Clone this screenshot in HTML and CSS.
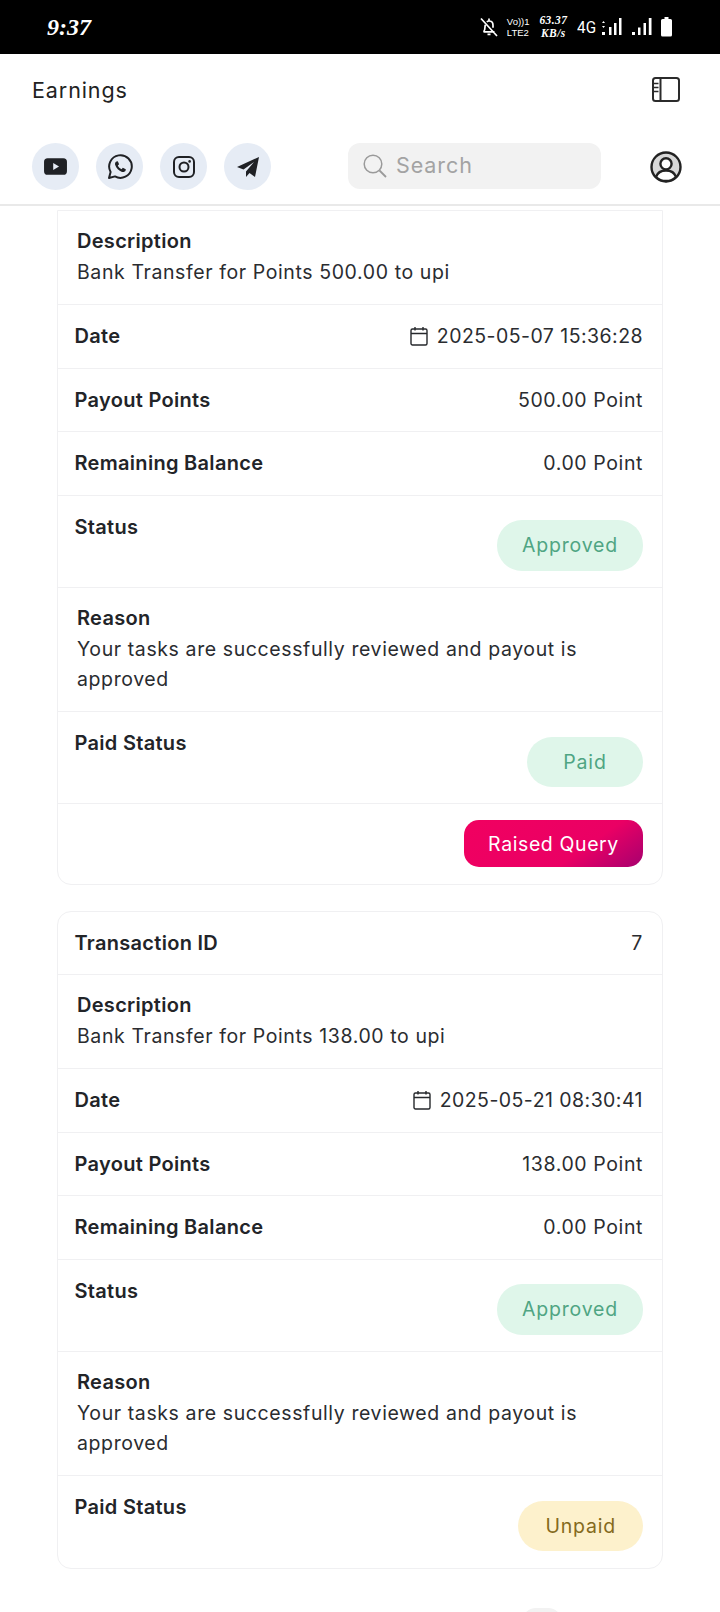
FILE: index.html
```html
<!DOCTYPE html>
<html lang="en">
<head>
<meta charset="utf-8">
<title>Earnings</title>
<link rel="stylesheet" href="styles.css">
</head>
<body>
<div class="statusbar">
  <span class="clock">9:37</span>
  <div class="status-icons">
    <svg class="bell" viewBox="0 0 20 20" width="20" height="20"><path d="M4.500 14.800c1.200-1.200 1.500-2.800 1.500-4.800 0-.8.100-1.500.4-2.100M7.800 4.800c.6-.5 1.400-.8 2.200-.8 2.400 0 4 1.800 4 4.200v2.500M15.500 14.800H4.500M8.500 17.300h3M10 1.500v2M2 1.500l16 17.500" fill="none" stroke="#fff" stroke-width="1.700"/></svg>
    <span class="net-stack"><span>Vo))1</span><span>LTE2</span></span>
    <span class="speed"><span>63.37</span><span>KB/s</span></span>
    <span class="fourg">4G</span>
    <svg class="sig-a" viewBox="0 0 20 18" width="20" height="18"><path d="M0 5l1.500-2L3 5zM0 8l1.500 2L3 8zM0 14h3v3H0zM7 9h2.500v8H7zM12 5h2.500v12H12zM17 0h2.500v17H17z" fill="#fff"/></svg>
    <svg class="sig-b" viewBox="0 0 20 18" width="20" height="18"><path d="M0 14h3v3H0zM6 9.500h2.500V17H6zM11.500 5H14v12h-2.500zM16.800 0h2.700v17h-2.700z" fill="#fff"/></svg>
    <svg class="batt" viewBox="0 0 11 20" width="11" height="20"><path d="M3.500 0h4v2h2a1.500 1.500 0 0 1 1.500 1.500V18a1.500 1.500 0 0 1-1.500 1.500h-8A1.500 1.500 0 0 1 0 18V3.500A1.500 1.500 0 0 1 1.500 2h2z" fill="#fff"/></svg>
  </div>
</div>

<header class="topbar">
  <div class="title-row">
    <h1 class="title">Earnings</h1>
    <svg class="side-icon" viewBox="0 0 28 25" width="28" height="25"><rect x="1" y="1" width="26" height="23" rx="2.500" fill="none" stroke="#2b2b2b" stroke-width="2"/><path d="M8.500 1v23" stroke="#2b2b2b" stroke-width="2"/><path d="M2 6.500h4.500M2 10.500h4.500M2 14.500h4.500" stroke="#2b2b2b" stroke-width="1.700"/></svg>
  </div>
  <div class="tool-row">
    <div class="socials">
      <span class="social"><svg viewBox="0 0 24 24" width="25" height="25"><path d="M4.500 4h15A3.500 3.500 0 0 1 23 7.500v9a3.500 3.500 0 0 1-3.500 3.500h-15A3.500 3.500 0 0 1 1 16.500v-9A3.500 3.500 0 0 1 4.500 4zM9.800 8.700v6.600l5.600-3.300z" fill="#1f2125" fill-rule="evenodd"/></svg></span>
      <span class="social"><svg viewBox="0 0 26 26" width="26" height="26"><path d="M2 24l1.600-6A11.300 11.300 0 1 1 8 22.400z" fill="none" stroke="#1f2125" stroke-width="2" stroke-linejoin="round"/><path d="M9.500 7.500c-1.300.5-1.800 2-1.300 3.600 1 3 3.700 5.800 6.800 6.800 1.600.5 3 0 3.600-1.300l.2-1.300-3-1.500-1.200 1.400c-1.700-.7-3-2-3.800-3.700l1.300-1.300-1.300-3z" fill="#1f2125"/></svg></span>
      <span class="social"><svg viewBox="0 0 24 24" width="24" height="24"><rect x="2" y="2" width="20" height="20" rx="5" fill="none" stroke="#1f2125" stroke-width="2"/><circle cx="12" cy="12" r="4.500" fill="none" stroke="#1f2125" stroke-width="2"/><circle cx="17.600" cy="6.400" r="1.300" fill="#1f2125"/></svg></span>
      <span class="social"><svg viewBox="0 0 24 24" width="24" height="24"><path d="M23 2L1 12l6.500 2.500L18 7l-8 9.500V22l3.500-4 5.500 4z" fill="#1f2125"/></svg></span>
    </div>
    <div class="search">
      <svg viewBox="0 0 24 24" width="24" height="24"><circle cx="10" cy="10" r="8.800" fill="none" stroke="#9a9a9a" stroke-width="1.500"/><path d="M16.500 16.500l6.500 6.500" stroke="#9a9a9a" stroke-width="1.800"/></svg>
      <span class="search-text">Search</span>
    </div>
    <svg class="profile" viewBox="0 0 32 32" width="32" height="32"><circle cx="16" cy="16" r="14.500" fill="#d8d8d8" stroke="#222" stroke-width="2.400"/><circle cx="16" cy="12.800" r="5.600" fill="#fff" stroke="#222" stroke-width="2.400"/><path d="M6 26c1.500-4.500 5.500-6.500 10-6.500s8.500 2 10 6.500c-2.500 2.600-6 4-10 4s-7.500-1.400-10-4z" fill="#fff" stroke="#222" stroke-width="2.400"/></svg>
  </div>
</header>

<main class="content">
  <section class="card card-first">
    <div class="row stack"><div class="label">Description</div><div class="value">Bank Transfer for Points 500.00 to upi</div></div>
    <div class="row"><div class="label">Date</div><div class="value date"><svg viewBox="0 0 18 20" width="18" height="20"><rect x="1" y="3" width="16" height="16" rx="1.500" fill="none" stroke="#26282c" stroke-width="1.400"/><path d="M1 7.500h16M5 1v3.500M13 1v3.500" stroke="#26282c" stroke-width="1.400"/></svg>2025-05-07 15:36:28</div></div>
    <div class="row"><div class="label">Payout Points</div><div class="value">500.00 Point</div></div>
    <div class="row"><div class="label">Remaining Balance</div><div class="value">0.00 Point</div></div>
    <div class="row row-top"><div class="label">Status</div><span class="pill pill-green">Approved</span></div>
    <div class="row stack"><div class="label">Reason</div><div class="value">Your tasks are successfully reviewed and payout is approved</div></div>
    <div class="row row-top"><div class="label">Paid Status</div><span class="pill pill-green pill-wide">Paid</span></div>
    <div class="row row-action"><button class="query" type="button">Raised Query</button></div>
  </section>

  <section class="card">
    <div class="row"><div class="label">Transaction ID</div><div class="value">7</div></div>
    <div class="row stack"><div class="label">Description</div><div class="value">Bank Transfer for Points 138.00 to upi</div></div>
    <div class="row"><div class="label">Date</div><div class="value date"><svg viewBox="0 0 18 20" width="18" height="20"><rect x="1" y="3" width="16" height="16" rx="1.500" fill="none" stroke="#26282c" stroke-width="1.400"/><path d="M1 7.500h16M5 1v3.500M13 1v3.500" stroke="#26282c" stroke-width="1.400"/></svg>2025-05-21 08:30:41</div></div>
    <div class="row"><div class="label">Payout Points</div><div class="value">138.00 Point</div></div>
    <div class="row"><div class="label">Remaining Balance</div><div class="value">0.00 Point</div></div>
    <div class="row row-top"><div class="label">Status</div><span class="pill pill-green">Approved</span></div>
    <div class="row stack"><div class="label">Reason</div><div class="value">Your tasks are successfully reviewed and payout is approved</div></div>
    <div class="row row-top"><div class="label">Paid Status</div><span class="pill pill-yellow">Unpaid</span></div>
  </section>
  <div class="next-pill"></div>
</main>
</body>
</html>
```
FILE: styles.css
```css
* { box-sizing: border-box; }
html, body { margin: 0; padding: 0; }
body {
  width: 720px;
  height: 1612px;
  overflow: hidden;
  background: #fff;
  font-family: Inter, "Liberation Sans", sans-serif;
  color: #26282c;
}
.statusbar {
  height: 54px;
  background: #000;
  color: #fff;
  display: flex;
  align-items: center;
  justify-content: space-between;
  padding: 0 48px 0 47px;
}
.clock {
  font-family: "Liberation Serif", serif;
  font-style: italic;
  font-weight: 700;
  font-size: 24px;
}
.status-icons { display: flex; align-items: center; }
.net-stack {
  width: 23px;
  margin-left: 8px;
  display: flex;
  flex-direction: column;
  font-family: "Liberation Sans", sans-serif;
  font-size: 9.500px;
  line-height: 11px;
  white-space: nowrap;
}
.speed {
  width: 31px;
  margin-left: 8px;
  display: flex;
  flex-direction: column;
  align-items: center;
  font-family: "Liberation Serif", serif;
  font-style: italic;
  font-weight: 700;
  font-size: 11.500px;
  line-height: 13.500px;
  letter-spacing: .4px;
  white-space: nowrap;
}
.fourg {
  margin-left: 7px;
  font-family: Roboto, sans-serif;
  font-size: 17px;
  transform: scaleX(.9);
}
.sig-a { margin-left: 5px; }
.sig-b { margin-left: 10px; }
.batt { margin-left: 9px; }
.topbar {
  height: 152px;
  border-bottom: 2px solid #e9e9e9;
  padding: 0 38px 0 32px;
}
.title-row {
  height: 71px;
  display: flex;
  align-items: center;
  justify-content: space-between;
}
.title {
  margin: 0;
  font-size: 21.500px;
  font-weight: 400;
  letter-spacing: .9px;
  color: #222;
}
.side-icon { margin-right: 2px; }
.tool-row { display: flex; align-items: center; height: 47px; margin-top: 18px; }
.socials { display: flex; gap: 17px; flex-shrink: 0; }
.social {
  width: 47px;
  height: 47px;
  border-radius: 50%;
  background: #e6ecf5;
  display: flex;
  align-items: center;
  justify-content: center;
}
.search {
  flex-shrink: 0;
  width: 253px;
  height: 46px;
  margin-left: 77px;
  margin-right: 49px;
  margin-bottom: 1.500px;
  border-radius: 12px;
  background: #f2f2f2;
  display: flex;
  align-items: center;
  gap: 9px;
  padding-left: 15px;
}
.search-text { font-size: 21.500px; letter-spacing: .9px; color: #a3a3a3; margin-bottom: 1px; }
.profile { flex-shrink: 0; }
.content { padding: 4px 57px 0 57px; }
.card {
  width: 606px;
  border: 1px solid #f0f0f2;
  border-radius: 14px;
  background: #fff;
  margin-bottom: 26px;
}
.card-first { border-top-left-radius: 0; border-top-right-radius: 0; }
.row {
  display: flex;
  justify-content: space-between;
  align-items: center;
  min-height: 63.500px;
  padding: 16px 19px 16px 16.500px;
  border-bottom: 1px solid #f0f0f2;
}
.card > .row:last-child { border-bottom: 0; }
.row-top { align-items: flex-start; height: 92px; padding-bottom: 0; }
.row-top .pill { margin-top: 8.500px; }
.row.stack { display: block; padding: 16px 19px 16.500px 19px; }
.stack .label { line-height: 29.500px; }
.stack .value { line-height: 30.500px; margin-top: .5px; }
.row-action { justify-content: flex-end; height: 79.500px; padding: 16px 19px 16px; align-items: flex-start; }
.label {
  font-size: 20px;
  line-height: 30px;
  font-weight: 600;
  letter-spacing: .3px;
  color: #222428;
}
.value {
  font-size: 19.500px;
  line-height: 30px;
  letter-spacing: .6px;
  color: #2a2c30;
}
.date { display: flex; align-items: center; gap: 9px; letter-spacing: .45px; }
.pill {
  height: 50.500px;
  border-radius: 25px;
  display: inline-flex;
  align-items: center;
  justify-content: center;
  padding: 0 25px;
  font-size: 19.500px;
  letter-spacing: .8px;
}
.pill-wide { min-width: 116px; }
.pill-green { background: #dff6ea; color: #4fa583; }
.pill-yellow { background: #fdf1cc; color: #846a1c; padding: 0 27px; }
.query {
  width: 179px;
  height: 47px;
  border: 0;
  border-radius: 15px;
  background: linear-gradient(145deg, #f10060 0%, #ea0064 65%, #a6006f 100%);
  color: #fff;
  font-family: inherit;
  font-size: 19.500px;
  letter-spacing: .6px;
}
.next-pill {
  width: 40px;
  height: 30px;
  margin-top: 39px;
  margin-left: 465px;
  border-radius: 14px;
  background: #f2f2f2;
}
```
